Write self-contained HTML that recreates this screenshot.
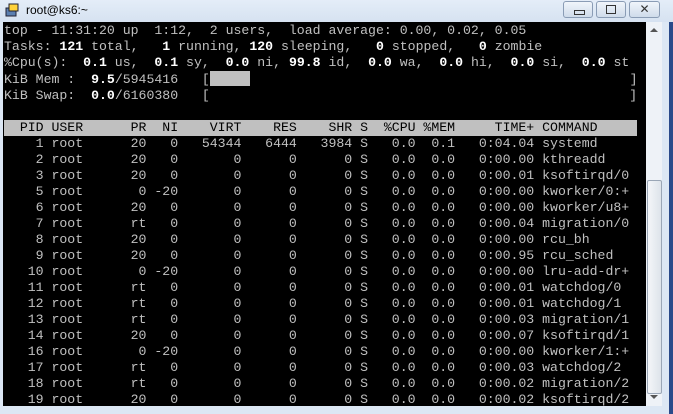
<!DOCTYPE html>
<html><head><style>
html,body{margin:0;padding:0;width:673px;height:414px;overflow:hidden;background:#dce7f4;font-family:"Liberation Sans",sans-serif}
#title{position:absolute;left:0;top:0;width:673px;height:22px;background:linear-gradient(#e4edf8,#d6e2f1)}
#title .t{position:absolute;left:26px;top:3px;font-size:12px;color:#000}
#icon{position:absolute;left:5px;top:3px;width:15px;height:14px}
.btn{position:absolute;top:1px;height:15px;border:1px solid #8a9cb5;border-radius:3px;background:linear-gradient(#f0f5fb,#cfdbea)}
#term{position:absolute;left:3px;top:22px;width:643px;height:384px;background:#000;overflow:hidden}
pre{margin:0;position:absolute;left:1px;top:1px;font-family:"Liberation Mono",monospace;font-size:13.2px;line-height:16px;color:#c0c0c0;white-space:pre}
b{color:#fff;font-weight:bold}
.hd{background:#c0c0c0;color:#000;display:inline-block;width:633px;height:16px}
.bar{background:#c0c0c0;display:inline-block;width:40px;height:15px;vertical-align:-3px}
#sb{position:absolute;left:646px;top:22px;width:16px;height:384px;background:#eef2f7}
#thumb{position:absolute;left:647px;top:180px;width:13px;height:212px;border:1px solid #9aa6b6;border-radius:2px;background:linear-gradient(90deg,#f4f6f9,#dde3ea)}
#edge{position:absolute;left:669px;top:22px;width:4px;height:392px;background:#2a4a8a}
</style></head><body>
<div id="title">
<svg id="icon" viewBox="0 0 15 14"><rect x="1" y="5" width="10" height="8" fill="#5b7fb0" stroke="#223"/><rect x="4" y="1" width="9" height="7" fill="#ffd23a" stroke="#223"/></svg>
<span class="t">root@ks6:~</span>
<div class="btn" style="left:563px;width:28px"><div style="position:absolute;left:10px;top:8px;width:9px;height:3px;border:1px solid #333"></div></div>
<div class="btn" style="left:596px;width:28px"><div style="position:absolute;left:9px;top:3px;width:8px;height:7px;border:1px solid #333"></div></div>
<div class="btn" style="left:629px;width:29px;text-align:center;font-size:12px;line-height:15px;color:#333">✕</div>
</div>
<div id="term"><pre>top - 11:31:20 up  1:12,  2 users,  load average: 0.00, 0.02, 0.05
Tasks: <b>121</b> total,   <b>1</b> running, <b>120</b> sleeping,   <b>0</b> stopped,   <b>0</b> zombie
%Cpu(s):  <b>0.1</b> us,  <b>0.1</b> sy,  <b>0.0</b> ni, <b>99.8</b> id,  <b>0.0</b> wa,  <b>0.0</b> hi,  <b>0.0</b> si,  <b>0.0</b> st
KiB Mem :  <b>9.5</b>/5945416   [<span class="bar"></span>                                                ]
KiB Swap:  <b>0.0</b>/6160380   [                                                     ]

<span class="hd">  PID USER      PR  NI    VIRT    RES    SHR S  %CPU %MEM     TIME+ COMMAND</span>
    1 root      20   0   54344   6444   3984 S   0.0  0.1   0:04.04 systemd
    2 root      20   0       0      0      0 S   0.0  0.0   0:00.00 kthreadd
    3 root      20   0       0      0      0 S   0.0  0.0   0:00.01 ksoftirqd/0
    5 root       0 -20       0      0      0 S   0.0  0.0   0:00.00 kworker/0:+
    6 root      20   0       0      0      0 S   0.0  0.0   0:00.00 kworker/u8+
    7 root      rt   0       0      0      0 S   0.0  0.0   0:00.04 migration/0
    8 root      20   0       0      0      0 S   0.0  0.0   0:00.00 rcu_bh
    9 root      20   0       0      0      0 S   0.0  0.0   0:00.95 rcu_sched
   10 root       0 -20       0      0      0 S   0.0  0.0   0:00.00 lru-add-dr+
   11 root      rt   0       0      0      0 S   0.0  0.0   0:00.01 watchdog/0
   12 root      rt   0       0      0      0 S   0.0  0.0   0:00.01 watchdog/1
   13 root      rt   0       0      0      0 S   0.0  0.0   0:00.03 migration/1
   14 root      20   0       0      0      0 S   0.0  0.0   0:00.07 ksoftirqd/1
   16 root       0 -20       0      0      0 S   0.0  0.0   0:00.00 kworker/1:+
   17 root      rt   0       0      0      0 S   0.0  0.0   0:00.03 watchdog/2
   18 root      rt   0       0      0      0 S   0.0  0.0   0:00.02 migration/2
   19 root      20   0       0      0      0 S   0.0  0.0   0:00.02 ksoftirqd/2</pre></div>
<div id="sb"><div style="position:absolute;left:4px;top:6px;width:0;height:0;border-left:4px solid transparent;border-right:4px solid transparent;border-bottom:4px solid #555"></div><div style="position:absolute;left:4px;top:373px;width:0;height:0;border-left:4px solid transparent;border-right:4px solid transparent;border-top:4px solid #555"></div></div>
<div id="thumb"></div>
<div id="edge"></div>
</body></html>
